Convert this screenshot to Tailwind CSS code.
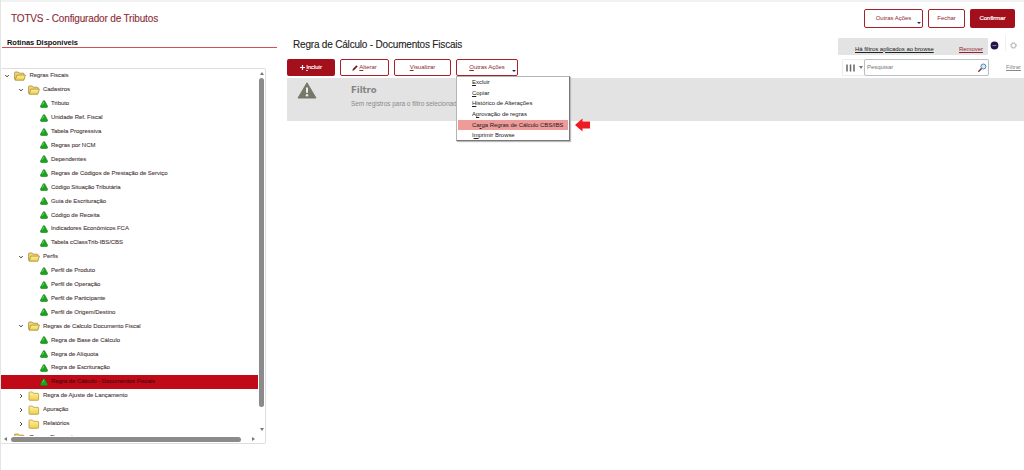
<!DOCTYPE html>
<html lang="pt-BR">
<head>
<meta charset="utf-8">
<title>TOTVS - Configurador de Tributos</title>
<script src="https://cdn.jsdelivr.net/npm/@tailwindcss/browser@4"></script>
</head>
<body class="h-[470px] w-[1024px] overflow-hidden bg-white font-['Liberation_Sans',Arial,sans-serif] text-[6px] tracking-[-0.045px] whitespace-nowrap text-[#4e3c3c]">
<svg width="0" height="0" class="absolute">
  <defs>
    <linearGradient id="fy" x1="0" y1="0" x2="0" y2="1"><stop offset="0" stop-color="#fff3a0"/><stop offset="1" stop-color="#efcd48"/></linearGradient>
    <symbol id="open" viewBox="0 0 12 10"><path d="M.6 8.5V1.8Q.6 1 1.4 1h2.8l1 1.2h4q.8 0 .8.8v1.2" fill="#f3d876" stroke="#a58a35" stroke-width=".8"/><path d="M1.2 9.2 2.8 4.1h8.6L9.8 9.2z" fill="url(#fy)" stroke="#a58a35" stroke-width=".8" stroke-linejoin="round"/></symbol>
    <symbol id="closed" viewBox="0 0 12 10"><path d="M1 8.6V1.7Q1 1 1.8 1h2.7l.9 1.3h4.4q.8 0 .8.8v5.5q0 .7-.8.7h-8Q1 9.300 1 8.6z" fill="url(#fy)" stroke="#b49a45" stroke-width=".8"/></symbol>
    <symbol id="leaf" viewBox="0 0 8 8"><path d="M4 .5Q4.700.5 5.300 2L7.500 6Q7.700 7.500 6.700 7.500H1.300Q.3 7.500.5 6L2.700 2Q3.300.5 4 .5z" fill="#18a51b" stroke="#187a1b" stroke-width=".6"/><path d="M3.700 2.200 2.700 4.300" stroke="#7de37b" stroke-width=".8" stroke-linecap="round"/></symbol>
    <symbol id="down" viewBox="0 0 6 6"><path d="M1.200 2 3 3.900 4.800 2" fill="none" stroke="#444" stroke-width="1"/></symbol>
    <symbol id="right" viewBox="0 0 6 6"><path d="M2.100 1.100 4 3 2.100 4.900" fill="none" stroke="#444" stroke-width="1"/></symbol>
  </defs>
</svg>
<div class="flex h-[470px] flex-col border-l border-[#e4e4e4]">
  <div class="h-[2px] shrink-0 bg-[#f1f1f1]"></div>
  <header class="flex h-[33px] shrink-0 items-center pr-[9px] pl-[10px]">
    <h1 class="flex-1 text-[10px] tracking-[-0.16px] text-[#8a2c34] [-webkit-text-stroke:0.1px_#8a2c34]">TOTVS - Configurador de Tributos</h1>
    <div class="flex gap-[5px] text-[6px] text-[#8c2a32]">
      <button class="relative h-[19px] w-[59px] rounded-[2px] border border-[#a5222c]">Outras Ações<span class="absolute right-[1px] bottom-[3px] border-x-[2px] border-t-[2px] border-x-transparent border-t-[#24246a]"></span></button>
      <button class="h-[19px] w-[37px] rounded-[2px] border border-[#a5222c]">Fechar</button>
      <button class="h-[19px] w-[45px] rounded-[2px] bg-[#a30f1b] text-white [-webkit-text-stroke:0.2px_white]">Confirmar</button>
    </div>
  </header>
  <div class="flex min-h-0 flex-1">
    <aside class="w-[286px] shrink-0">
      <h2 class="ml-[1px] h-[12px] pl-[5px] text-[7.500px] leading-[16px] font-bold text-[#111]">Rotinas Disponíveis</h2>
      <div class="ml-[1px] h-px w-[275px] bg-[#cf5057]"></div>
      <div class="mt-[20px] flex h-[376px] w-[265px] flex-col rounded-[2px] border border-l-0 border-[#dedede]">
        <div class="flex min-h-0 flex-1">
          <ul class="h-[367px] w-[257px] overflow-hidden [-webkit-text-stroke:0.1px_#4e3c3c] [&_svg]:shrink-0 [&>li]:flex [&>li]:h-[13.920px] [&>li]:items-center">
            <li class="pl-[3px]"><svg class="mr-[4px] h-[6px] w-[6px]"><use href="#down"/></svg><svg class="mr-[3.500px] h-[10px] w-[12px]"><use href="#open"/></svg>Regras Fiscais</li>
            <li class="pl-[16.500px]"><svg class="mr-[4px] h-[6px] w-[6px]"><use href="#down"/></svg><svg class="mr-[3.500px] h-[10px] w-[12px]"><use href="#open"/></svg>Cadastros</li>
            <li class="pl-[39px]"><svg class="mr-[3px] h-[8px] w-[8px]"><use href="#leaf"/></svg>Tributo</li>
            <li class="pl-[39px]"><svg class="mr-[3px] h-[8px] w-[8px]"><use href="#leaf"/></svg>Unidade Ref. Fiscal</li>
            <li class="pl-[39px]"><svg class="mr-[3px] h-[8px] w-[8px]"><use href="#leaf"/></svg>Tabela Progressiva</li>
            <li class="pl-[39px]"><svg class="mr-[3px] h-[8px] w-[8px]"><use href="#leaf"/></svg>Regras por NCM</li>
            <li class="pl-[39px]"><svg class="mr-[3px] h-[8px] w-[8px]"><use href="#leaf"/></svg>Dependentes</li>
            <li class="pl-[39px]"><svg class="mr-[3px] h-[8px] w-[8px]"><use href="#leaf"/></svg>Regras de Códigos de Prestação de Serviço</li>
            <li class="pl-[39px]"><svg class="mr-[3px] h-[8px] w-[8px]"><use href="#leaf"/></svg>Código Situação Tributária</li>
            <li class="pl-[39px]"><svg class="mr-[3px] h-[8px] w-[8px]"><use href="#leaf"/></svg>Guia de Escrituração</li>
            <li class="pl-[39px]"><svg class="mr-[3px] h-[8px] w-[8px]"><use href="#leaf"/></svg>Código de Receita</li>
            <li class="pl-[39px]"><svg class="mr-[3px] h-[8px] w-[8px]"><use href="#leaf"/></svg>Indicadores Econômicos FCA</li>
            <li class="pl-[39px]"><svg class="mr-[3px] h-[8px] w-[8px]"><use href="#leaf"/></svg>Tabela cClassTrib-IBS/CBS</li>
            <li class="pl-[16.500px]"><svg class="mr-[4px] h-[6px] w-[6px]"><use href="#down"/></svg><svg class="mr-[3.500px] h-[10px] w-[12px]"><use href="#open"/></svg>Perfis</li>
            <li class="pl-[39px]"><svg class="mr-[3px] h-[8px] w-[8px]"><use href="#leaf"/></svg>Perfil de Produto</li>
            <li class="pl-[39px]"><svg class="mr-[3px] h-[8px] w-[8px]"><use href="#leaf"/></svg>Perfil de Operação</li>
            <li class="pl-[39px]"><svg class="mr-[3px] h-[8px] w-[8px]"><use href="#leaf"/></svg>Perfil de Participante</li>
            <li class="pl-[39px]"><svg class="mr-[3px] h-[8px] w-[8px]"><use href="#leaf"/></svg>Perfil de Origem/Destino</li>
            <li class="pl-[16.500px]"><svg class="mr-[4px] h-[6px] w-[6px]"><use href="#down"/></svg><svg class="mr-[3.500px] h-[10px] w-[12px]"><use href="#open"/></svg>Regras de Calculo Documento Fiscal</li>
            <li class="pl-[39px]"><svg class="mr-[3px] h-[8px] w-[8px]"><use href="#leaf"/></svg>Regra de Base de Cálculo</li>
            <li class="pl-[39px]"><svg class="mr-[3px] h-[8px] w-[8px]"><use href="#leaf"/></svg>Regra de Alíquota</li>
            <li class="pl-[39px]"><svg class="mr-[3px] h-[8px] w-[8px]"><use href="#leaf"/></svg>Regra de Escrituração</li>
            <li class="bg-[#c00a17] pl-[39px] text-[#4d0810] [-webkit-text-stroke:0.1px_#4d0810]"><svg class="mr-[3px] h-[8px] w-[8px]"><use href="#leaf"/></svg>Regra de Cálculo - Documentos Fiscais</li>
            <li class="pl-[16.500px]"><svg class="mr-[4px] h-[6px] w-[6px]"><use href="#right"/></svg><svg class="mr-[3.500px] h-[10px] w-[12px]"><use href="#closed"/></svg>Regra de Ajuste de Lançamento</li>
            <li class="pl-[16.500px]"><svg class="mr-[4px] h-[6px] w-[6px]"><use href="#right"/></svg><svg class="mr-[3.500px] h-[10px] w-[12px]"><use href="#closed"/></svg>Apuração</li>
            <li class="pl-[16.500px]"><svg class="mr-[4px] h-[6px] w-[6px]"><use href="#right"/></svg><svg class="mr-[3.500px] h-[10px] w-[12px]"><use href="#closed"/></svg>Relatórios</li>
            <li class="pl-[13px]"><svg class="mr-[3.500px] h-[10px] w-[12px]"><use href="#open"/></svg>Regras Financeiras</li>
          </ul>
          <div class="flex w-[7px] flex-col items-center pt-[3px] pb-[5px]">
            <span class="border-x-[2px] border-b-[3px] border-x-transparent border-b-[#777]"></span>
            <span class="mt-[3px] h-[329px] w-[5px] rounded-full bg-[#8b8b8b]"></span>
            <span class="mt-auto border-x-[2px] border-t-[3px] border-x-transparent border-t-[#777]"></span>
          </div>
        </div>
        <div class="flex h-[7px] items-center pb-[1px] pl-[3px]">
          <span class="border-y-[2px] border-r-[3px] border-y-transparent border-r-[#777]"></span>
          <span class="ml-[4px] h-[5px] w-[230px] rounded-full bg-[#8b8b8b]"></span>
          <span class="ml-[11px] border-y-[2px] border-l-[3px] border-y-transparent border-l-[#777]"></span>
        </div>
      </div>
    </aside>
    <main class="flex min-w-0 flex-1 flex-col">
      <div class="flex h-[20px] items-start">
        <h2 class="flex-1 pl-[6px] text-[10px] leading-[20px] tracking-[-0.19px] text-[#222] [-webkit-text-stroke:0.1px_#222]">Regra de Cálculo - Documentos Fiscais</h2>
        <div class="mt-[3px] flex h-[17px] w-[150px] items-center justify-between rounded-[1px] bg-[#e3e3e3] pt-[5px] pr-[5px] pl-[17px]"><a class="text-[#222] underline">Há filtros aplicados ao browse</a><a class="text-[#96202a] underline">Remover</a></div>
        <svg class="mt-[6px] ml-[2px] h-[9px] w-[9px]" viewBox="0 0 9 9"><circle cx="4.500" cy="4.500" r="3.900" fill="#23154a"/><path d="M2.500 4.500h4" stroke="#9088a8" stroke-width=".9"/></svg>
        <span class="ml-[6px] h-[16px] w-px bg-[#eee]"></span>
        <svg class="mt-[7px] mr-[7px] ml-[4px] h-[7px] w-[7px]" viewBox="0 0 7 7" fill="none" stroke="#a5a5a5"><circle cx="3.500" cy="3.500" r="2.200" stroke-width=".8"/><circle cx="3.500" cy="3.500" r="3" stroke-width=".8" stroke-dasharray="1 1.356"/></svg>
      </div>
      <div class="flex h-[23px] items-start pt-[4px] text-[6px] text-[#8c2a32]">
        <button class="flex h-[17px] w-[48px] items-center justify-center gap-[1px] rounded-[2px] bg-[#a30f1b] text-white [-webkit-text-stroke:0.150px_white]"><svg class="h-[5px] w-[5px]" viewBox="0 0 5 5"><path d="M2.500 0v5M0 2.500h5" stroke="#fff" stroke-width="1.200"/></svg><span><u>I</u>ncluir</span></button>
        <button class="ml-[5px] flex h-[17px] w-[49px] items-center justify-center gap-[1px] rounded-[2px] border border-[#a5222c]"><svg class="h-[6px] w-[6px]" viewBox="0 0 6 6"><path d="M.3 5.700.8 4 4.500.3 5.700 1.500 2 5.200z" fill="#781720"/></svg><span><u>A</u>lterar</span></button>
        <button class="ml-[5px] h-[17px] w-[57px] rounded-[2px] border border-[#a5222c]"><u>V</u>isualizar</button>
        <div class="relative ml-[5px]">
          <button class="relative h-[17px] w-[62px] rounded-[2px] border border-[#a5222c]"><u>O</u>utras Ações<span class="absolute right-[1px] bottom-[3px] border-x-[2px] border-t-[2px] border-x-transparent border-t-[#24246a]"></span></button>
          <ul class="absolute top-[17px] left-0 z-10 h-[65px] w-[114px] border border-[#b5b5b5] border-r-[#777] border-b-[#777] bg-white px-px text-[6px] leading-[10.700px] text-[#222] shadow-[1px_1px_1px_#bbb] [&>li]:h-[10.700px] [&>li]:pl-[14px]">
            <li><u>E</u>xcluir</li>
            <li><u>C</u>opiar</li>
            <li><u>H</u>istórico de Alterações</li>
            <li>A<u>p</u>rovação de regras</li>
            <li class="bg-[#ee9b99]">Ca<u>r</u>ga Regras de Cálculo CBS/IBS</li>
            <li>I<u>m</u>primir Browse</li>
          </ul>
          <svg class="absolute top-[59px] left-[119px] z-10 h-[14px] w-[16px]" viewBox="0 0 16 14"><path d="M0 7 7.500.5V3.500H15v7H7.500v3z" fill="#ed1c24"/></svg>
        </div>
        <div class="ml-auto flex h-[17px] w-[147px] items-center rounded-[1px] border border-[#ececec]">
          <svg class="ml-[3px] h-[8px] w-[9px]" viewBox="0 0 9 8"><path d="M1 .5v7M4.500.5v7M8 .5v7" stroke="#666" stroke-width="1.500"/></svg>
          <span class="ml-[4px] border-x-[2px] border-t-[3px] border-x-transparent border-t-[#777]"></span>
          <div class="-mr-px ml-auto flex h-[17px] w-[125px] items-center justify-between rounded-[2px] border border-[#b9c0c4] pr-px pl-[2px] text-[#777]">Pesquisar<svg class="h-[9px] w-[9px]" viewBox="0 0 9 9"><path d="M.8 8.200 3.500 5.500" stroke="#7a3b2c" stroke-width="1.500" stroke-linecap="round"/><circle cx="5.400" cy="3.500" r="2.500" fill="#d2e7fa" stroke="#4878a8" stroke-width=".9"/></svg></div>
        </div>
        <a class="mr-[3px] ml-[17px] w-[15px] pt-[4px] text-[6px] leading-[9px] text-[#888] underline">Filtrar</a>
      </div>
      <section class="flex h-[43px] bg-[#e3e3e3] pt-[4px] pl-[10px]">
        <svg class="h-[17px] w-[20px]" viewBox="0 0 20 17"><path d="M10 .8 19 16H1z" fill="#77776a" stroke="#77776a" stroke-linejoin="round"/><path d="M10 5.500v5.200" stroke="#eee" stroke-width="2"/><circle cx="10" cy="13.300" r="1.200" fill="#eee"/></svg>
        <div class="pl-[34px]">
          <h3 class="font-['DejaVu_Sans',sans-serif] text-[8.500px] leading-[16px] font-bold text-[#858585]">Filtro</h3>
          <p class="text-[6.500px] leading-[11px] text-[#8b8b8b]">Sem registros para o filtro selecionado</p>
        </div>
      </section>
    </main>
  </div>
</div>
</body>
</html>
